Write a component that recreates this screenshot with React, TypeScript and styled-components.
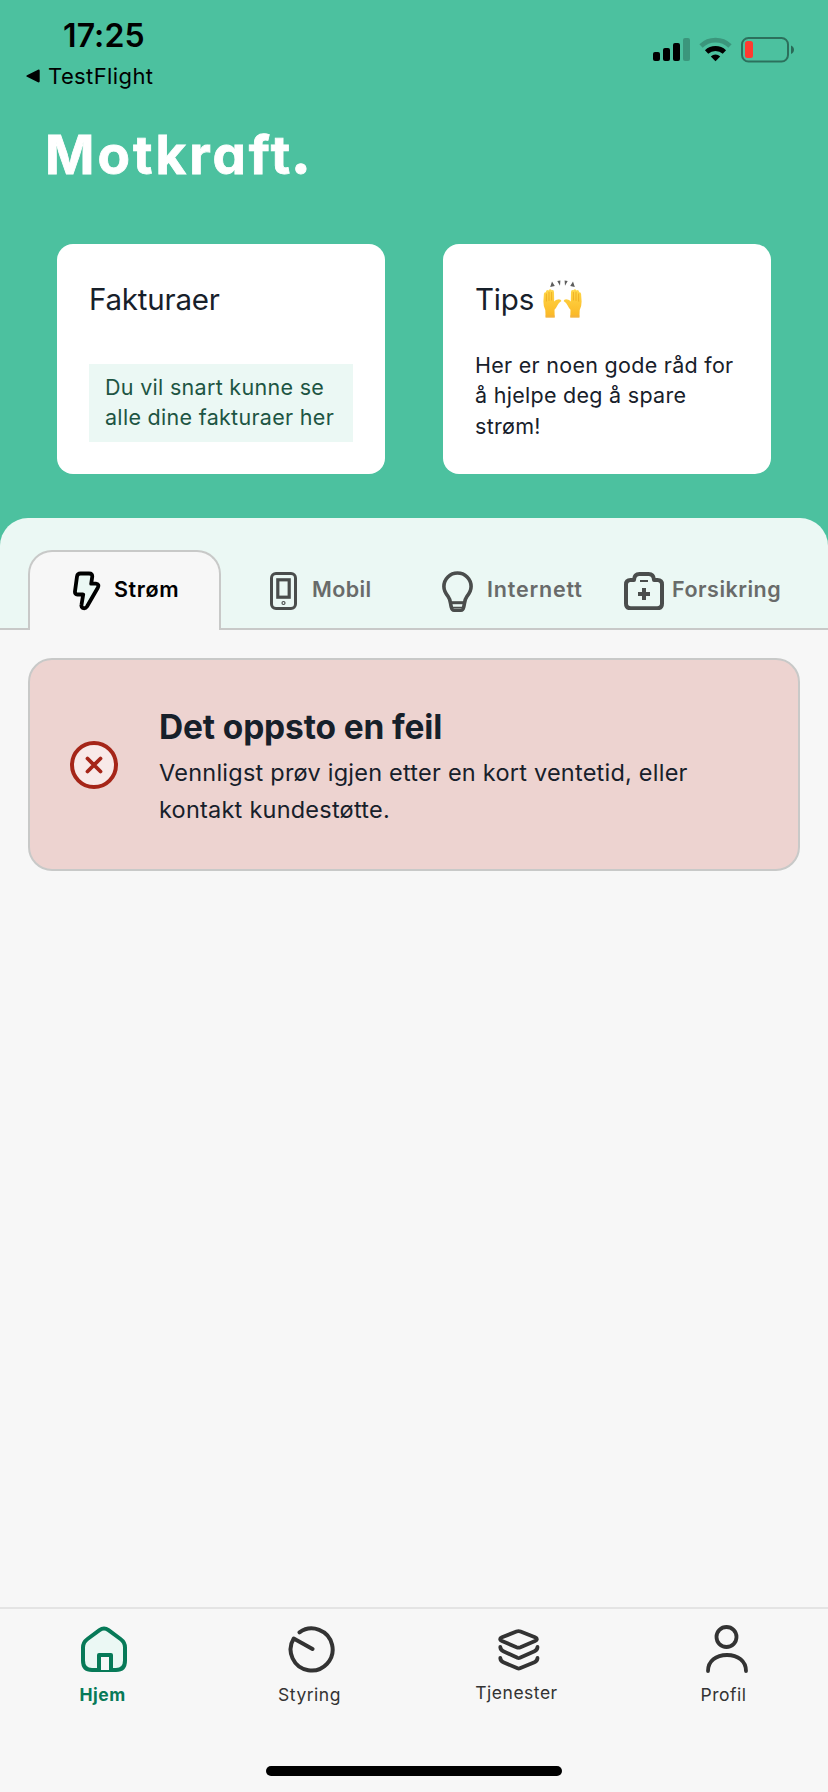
import React from 'react';
import styled, { createGlobalStyle } from 'styled-components';

const GlobalStyle = createGlobalStyle`
  *, *::before, *::after { box-sizing: border-box; }
  body { margin: 0; background: #f7f7f7; }
  svg { display: block; flex: none; }
`;

const Screen = styled.div`
  width: 828px;
  height: 1792px;
  display: flex;
  flex-direction: column;
  background: #4cc19f;
  color: #17202a;
  font-family: Inter, "Liberation Sans", sans-serif;
  overflow: hidden;
`;

const StatusBar = styled.div`
  height: 96px;
  display: flex;
  justify-content: space-between;
  padding: 0 34px 0 26px;
  color: #000;
`;

const StatusLeft = styled.div`
  display: flex;
  flex-direction: column;
  padding-top: 16px;
`;

const Clock = styled.div`
  padding-left: 37px;
  font-size: 32px;
  font-weight: 600;
  line-height: 40px;
  letter-spacing: 0.1px;
`;

const BackLink = styled.div`
  display: flex;
  align-items: center;
  gap: 8px;
  font-size: 22px;
  line-height: 40px;
  letter-spacing: 0.4px;
`;

const StatusIcons = styled.div`
  display: flex;
  align-items: flex-start;
  gap: 9px;
  padding-top: 37px;
`;

const Logo = styled.h1`
  height: 148px;
  margin: 0;
  padding: 22px 0 0 45px;
  color: #fff;
  font-size: 53px;
  line-height: 74px;
  font-weight: 700;
  letter-spacing: 3px;
  font-feature-settings: 'cv11';
  -webkit-text-stroke: 0.8px #fff;
`;

const LogoDot = styled.span`
  font-family: Lato, sans-serif;
  font-size: 64px;
  font-weight: 900;
  line-height: 0;
`;

const Cards = styled.section`
  height: 274px;
  display: flex;
  justify-content: space-between;
  padding: 0 57px 44px;
`;

const Card = styled.article`
  width: 328px;
  height: 230px;
  padding: 32px;
  border-radius: 16px;
  background: #fff;
`;

const CardTitle = styled.h2`
  display: flex;
  align-items: center;
  gap: 9px;
  height: 46px;
  margin: 0;
  font-size: 29.5px;
  font-weight: 400;
  letter-spacing: -0.2px;
`;

const CardText = styled.p`
  margin: 28px 0 0;
  font-size: 21.5px;
  line-height: 30.4px;
  letter-spacing: 0.28px;
  white-space: nowrap;
`;

const CardNote = styled.p`
  height: 78px;
  margin: 42px 0 0;
  padding: 8px 16px;
  background: #ebf8f4;
  color: #1d5543;
  font-size: 21.5px;
  line-height: 30.4px;
  letter-spacing: 0.3px;
  white-space: nowrap;
`;

const TabBar = styled.div`
  height: 112px;
  flex: none;
  display: flex;
  align-items: flex-end;
  padding: 0 28px;
  background: #ebf8f4;
  border-radius: 28px 28px 0 0;
  box-shadow: inset 0 -2px #c8c9c8;
`;

const Tab = styled.button<{ $active?: boolean; $gap: number; $inset: number }>`
  width: 193px;
  height: 80px;
  flex: none;
  display: flex;
  align-items: center;
  gap: ${p => p.$gap}px;
  padding: 0 0 0 ${p => p.$inset}px;
  border: 2px solid ${p => (p.$active ? '#c8c9c8' : 'transparent')};
  border-bottom: 0;
  border-radius: 24px 24px 0 0;
  background: ${p => (p.$active ? '#f7f7f7' : 'transparent')};
  color: ${p => (p.$active ? '#000' : '#696b6a')};
`;

const TabLabel = styled.span<{ $tracking: number }>`
  padding-bottom: 4px;
  font: 600 21.5px/30px Inter, "Liberation Sans", sans-serif;
  letter-spacing: ${p => p.$tracking}px;
`;

const Content = styled.main`
  flex: 1;
  padding: 28px;
  background: #f7f7f7;
`;

const ErrorCard = styled.div`
  height: 213px;
  display: flex;
  align-items: center;
  gap: 41px;
  padding-left: 40px;
  border: 2px solid #c8c9c8;
  border-radius: 24px;
  background: #edd3d0;
`;

const ErrorBody = styled.div`
  padding-top: 2px;
`;

const ErrorTitle = styled.h2`
  margin: 0 0 4px;
  font-size: 33.5px;
  font-weight: 700;
  line-height: 48px;
  letter-spacing: -0.15px;
`;

const ErrorText = styled.p`
  margin: 0;
  font-size: 23.5px;
  line-height: 36.6px;
  letter-spacing: 0.23px;
`;

const BottomNav = styled.nav`
  height: 185px;
  flex: none;
  display: flex;
  flex-direction: column;
  align-items: center;
  justify-content: space-between;
  padding-bottom: 16px;
  border-top: 2px solid #e4e4e4;
  background: #f7f7f7;
`;

const NavRow = styled.div`
  width: 100%;
  display: flex;
`;

const NavItem = styled.a<{ $active?: boolean; $raised?: boolean }>`
  width: 207px;
  display: flex;
  flex-direction: column;
  align-items: center;
  gap: ${p => (p.$raised ? 7 : 9)}px;
  padding: 15px 2px 0 0;
  color: ${p => (p.$active ? '#077a58' : '#333')};
  font-size: 17.5px;
  font-weight: ${p => (p.$active ? 700 : 400)};
  line-height: 24px;
  letter-spacing: 0.5px;
`;

const NavIcon = styled.svg<{ $shift?: number }>`
  margin-left: ${p => p.$shift ?? 4}px;
`;

const HomeIndicator = styled.div`
  width: 296px;
  height: 10px;
  border-radius: 5px;
  background: #000;
`;

const Signal = () => (
  <svg width="37" height="25" viewBox="0 0 37 25">
    <rect x="0" y="15" width="7" height="9" rx="2" />
    <rect x="10" y="11" width="7" height="13" rx="2" />
    <rect x="20" y="6" width="7" height="18" rx="2" />
    <rect x="30" y="1" width="7" height="23" rx="2" opacity=".22" />
  </svg>
);

const Wifi = () => (
  <svg width="33" height="25" viewBox="0 0 33 25" fill="none" stroke="#000">
    <path d="M2 9A21 21 0 0 1 31 9" strokeWidth="4.800" opacity=".22" />
    <path d="M7.600 15a13 13 0 0 1 17.800 0" strokeWidth="4.800" />
    <path d="M16.500 24.200l-4.700-4.800a7 7 0 0 1 9.400 0z" fill="#000" stroke="none" />
  </svg>
);

const Battery = () => (
  <svg width="53" height="26" viewBox="0 0 53 26">
    <rect x="1" y="1" width="46" height="23.500" rx="6.500" fill="none" stroke="#000" strokeOpacity=".42" strokeWidth="2" />
    <rect x="4" y="4" width="8" height="17" rx="2.500" fill="#ff3b30" />
    <path d="M50 8.500c4 1.800 4 6.700 0 8.500z" opacity=".45" />
  </svg>
);

const BackArrow = () => (
  <svg width="14" height="14" viewBox="0 0 14 14">
    <path d="M1 6.200 12 .7q1.700-.6 1.700 1v10.600q0 1.600-1.700 1L1 7.800q-1.400-.8 0-1.600z" />
  </svg>
);

const Hand = () => (
  <>
    <path d="M2.600 37.500 2.300 30Q.3 26 .4 21.500L.9 14q.3-2 1.700-1.600 1-3.200 2.900-1.900 1.600-2.500 3.200-.3 2.400-.5 2.300 2l.2 9.300q1.800-2.300 3.900-2.100 2.800-.3 3.300 1.600-2.900 1.800-4.200 4.700-1.200 2.600-2.700 4l.2 7.800z" fill="url(#skin)" />
    <path d="M3.400 13.500v8M6 11.800v9M8.600 12v8.500" fill="none" stroke="#e9a318" strokeWidth=".7" />
    <path d="M2.600 35.300h9.100v2.200H2.600z" fill="#f0b04a" opacity=".65" />
  </>
);

const RaisedHands = () => (
  <svg width="39" height="38" viewBox="0 0 39 38">
    <defs>
      <linearGradient id="skin" x1="0" y1="0" x2="0" y2="1">
        <stop offset="0" stopColor="#ffd84a" />
        <stop offset="1" stopColor="#fbb724" />
      </linearGradient>
    </defs>
    <Hand />
    <g transform="translate(39 0) scale(-1 1)"><Hand /></g>
    <path d="M9 1.500 11.800 6l-4.600.9zM14.300.9 17.400.4l-.4 5.400zM24.700.9 21.600.4l.4 5.400zM30 1.500 27.200 6l4.600.9z" fill="#5d5d5d" />
  </svg>
);

const Bolt = () => (
  <svg width="28" height="40" viewBox="0 0 28 40">
    <path d="M7.500 2.500H16q3.700 0 3.200 3.500l-1 6.700h4.600q3.800.5 2 4L14 35.500q-1.700 2.500-4.200 1.500-1.800-1-1.300-3.200l1.700-10.300H4.500q-2.800-.3-2.500-3.200L4 5.500q.5-3 3.500-3z" fill="#ebf8f4" stroke="#000" strokeWidth="3.800" strokeLinejoin="round" />
  </svg>
);

const Phone = () => (
  <svg width="27" height="38" viewBox="0 0 27 38" fill="none" stroke="#4a4d4c">
    <rect x="1.500" y="1.500" width="24" height="35" rx="4.500" strokeWidth="3" />
    <rect x="7.800" y="7.800" width="11.400" height="17.400" strokeWidth="3.200" />
    <circle cx="13.500" cy="31" r="1.500" strokeWidth="1.200" />
  </svg>
);

const Bulb = () => (
  <svg width="31" height="41" viewBox="0 0 31 41" fill="none" stroke="#4a4d4c" strokeWidth="3.600" strokeLinejoin="round">
    <path d="M15.500 2C8 2 1.900 8 1.900 15.500c0 4.400 1.800 7 4.300 10.100 2.400 3 2 6.500 3.200 10.900.4 2 1.200 2.700 2.600 2.700h7c1.400 0 2.200-.7 2.600-2.700 1.200-4.400.8-7.900 3.200-10.900 2.500-3.100 4.300-5.700 4.300-10.100C29.100 8 23 2 15.500 2z" />
    <path d="M8.500 31.700h14" strokeWidth="3" />
    <path d="M11 36.500h9" strokeWidth="1.500" />
  </svg>
);

const FirstAid = () => (
  <svg width="40" height="38" viewBox="0 0 40 38" fill="none" stroke="#4a4d4c">
    <path d="M6.500 8H10q.3-6 5.500-6h9q5.200 0 5.500 6h3.500Q38 8 38 12.500v19q0 4.800-4.800 4.800H6.800Q2 36.300 2 31.500v-19Q2 8 6.500 8z" strokeWidth="4" strokeLinejoin="round" />
    <path d="M16 9h8" strokeWidth="2" />
    <path d="M14 22h12M20 16v12" strokeWidth="4" />
  </svg>
);

const ErrorIcon = () => (
  <svg width="48" height="48" viewBox="0 0 48 48" stroke="#a52518" strokeLinecap="round">
    <circle cx="24" cy="24" r="22" fill="#f8e9e8" strokeWidth="4" />
    <path d="M17.500 17.500l13 13M30.500 17.500l-13 13" strokeWidth="3.800" />
  </svg>
);

const HomeIcon = () => (
  <NavIcon $shift={2} width="50" height="50" viewBox="0 0 50 50" stroke="#077a58" strokeWidth="4" strokeLinejoin="round">
    <path d="M20.500 6.200q4.500-3.400 9 0L41.500 15q4.500 3.300 4.500 8.500v13q0 9.500-9 9.500H13q-9 0-9-9.500v-13Q4 18.300 8.500 15z" fill="#ebf8f4" />
    <path d="M20 46V31h12v15" fill="#f7f7f7" />
  </NavIcon>
);

const TimerIcon = () => (
  <NavIcon width="50" height="50" viewBox="0 0 50 50" fill="none" stroke="#333" strokeWidth="4" strokeLinecap="round" strokeLinejoin="round">
    <path d="M12.500 8.300A21 21 0 1 1 6.700 14.500L25.500 25" />
  </NavIcon>
);

const LayersIcon = () => (
  <NavIcon $shift={5} width="50" height="50" viewBox="0 0 50 50" fill="none" stroke="#333" strokeWidth="3.800" strokeLinecap="round" strokeLinejoin="round">
    <path d="M22.500 7.500q2-.8 4 0L41 13.300q3.800 1.800 0 3.700l-14.500 6.200q-2 .8-4 0L8 17q-3.800-1.900 0-3.700z" />
    <path d="M6.300 23q.2 3 3 4.200L23.500 33.800q1.200.5 2.400 0L40.500 27.200q2.800-1.200 3-4.200" />
    <path d="M6.300 34q.2 3 3 4.200L23.500 44.300q1.200.5 2.400 0L40.500 38.200q2.800-1.200 3-4.200" />
  </NavIcon>
);

const ProfileIcon = () => (
  <NavIcon width="50" height="50" viewBox="0 0 50 50" fill="none" stroke="#333" strokeWidth="3.800" strokeLinecap="round">
    <circle cx="25.500" cy="13" r="10" />
    <path d="M7 47C7 37 15 31 26 31s19 6 19 16" />
  </NavIcon>
);

export default function App() {
  return (
    <>
      <GlobalStyle />
      <Screen>
        <StatusBar>
          <StatusLeft>
            <Clock>17:25</Clock>
            <BackLink><BackArrow />TestFlight</BackLink>
          </StatusLeft>
          <StatusIcons><Signal /><Wifi /><Battery /></StatusIcons>
        </StatusBar>
        <Logo>Motkraft<LogoDot>.</LogoDot></Logo>
        <Cards>
          <Card>
            <CardTitle>Fakturaer</CardTitle>
            <CardNote>Du vil snart kunne se<br />alle dine fakturaer her</CardNote>
          </Card>
          <Card>
            <CardTitle>Tips <RaisedHands /></CardTitle>
            <CardText>Her er noen gode råd for<br />å hjelpe deg å spare<br />strøm!</CardText>
          </Card>
        </Cards>
        <TabBar>
          <Tab $active $gap={13} $inset={43}><Bolt /><TabLabel $tracking={0.6}>Strøm</TabLabel></Tab>
          <Tab $gap={15} $inset={47}><Phone /><TabLabel $tracking={0.4}>Mobil</TabLabel></Tab>
          <Tab $gap={14} $inset={26}><Bulb /><TabLabel $tracking={0.8}>Internett</TabLabel></Tab>
          <Tab $gap={8} $inset={15}><FirstAid /><TabLabel $tracking={0.5}>Forsikring</TabLabel></Tab>
        </TabBar>
        <Content>
          <ErrorCard>
            <ErrorIcon />
            <ErrorBody>
              <ErrorTitle>Det oppsto en feil</ErrorTitle>
              <ErrorText>Vennligst prøv igjen etter en kort ventetid, eller<br />kontakt kundestøtte.</ErrorText>
            </ErrorBody>
          </ErrorCard>
        </Content>
        <BottomNav>
          <NavRow>
            <NavItem $active><HomeIcon />Hjem</NavItem>
            <NavItem><TimerIcon />Styring</NavItem>
            <NavItem $raised><LayersIcon />Tjenester</NavItem>
            <NavItem><ProfileIcon />Profil</NavItem>
          </NavRow>
          <HomeIndicator />
        </BottomNav>
      </Screen>
    </>
  );
}
